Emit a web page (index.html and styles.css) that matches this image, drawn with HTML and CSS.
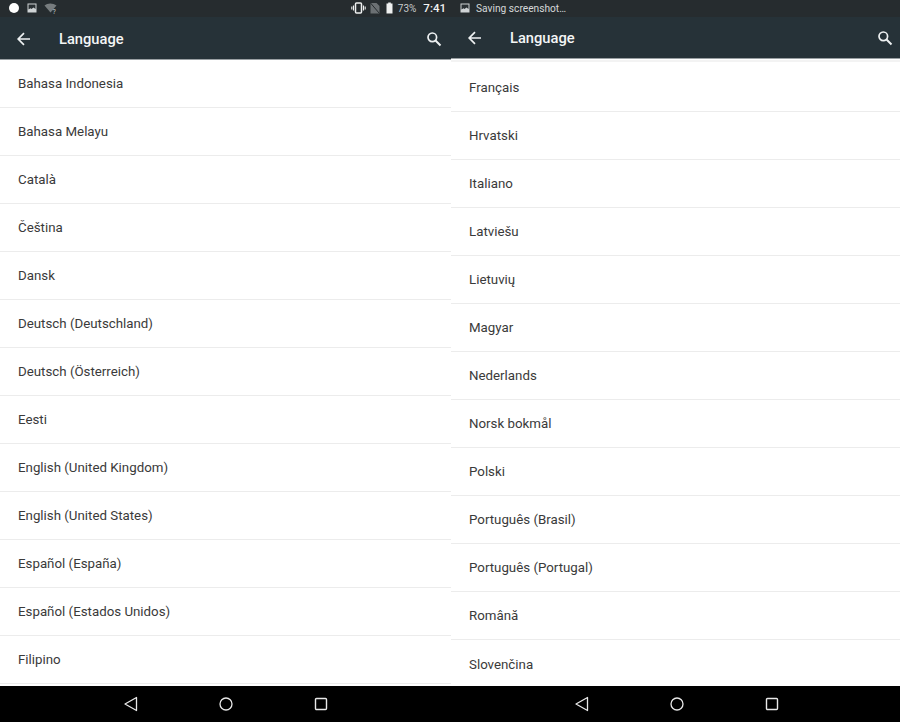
FILE: index.html
```html
<!DOCTYPE html>
<html lang="en">
<head>
    <meta charset="UTF-8">
    <meta name="viewport" content="width=device-width, initial-scale=1.0">
    <title>Language</title>
    <link rel="stylesheet" href="styles.css">
</head>
<body>
    <div class="screens">
        <!-- left phone -->
        <div class="phone phone-left">
            <div class="status-bar">
                <svg width="12" height="12" viewBox="0 0 12 12"><circle cx="6" cy="6" r="5" fill="#fff"/></svg>
                <svg class="st-gap" width="12" height="12" viewBox="0 0 12 12"><path d="M1.500 1.500h9v9h-9z" fill="#cfd3d5"/><path d="M2.500 2.500h7v4.500L7.500 5.500 5.500 7 4.500 6.300 2.500 7.500z" fill="#2a3033"/></svg>
                <svg class="st-gap" width="14" height="12" viewBox="0 0 14 12"><path d="M0.500 3.500C3.500 0.800 9 0.800 12.500 3.500L6.500 10.500z" fill="#777c7e"/><text x="8.500" y="11.500" class="st-q">?</text></svg>
                <div class="status-right">
                    <svg width="15" height="12" viewBox="0 0 15 12"><rect x="4.500" y="1" width="6" height="10" rx="1" fill="none" stroke="#eef0f0" stroke-width="1.500"/><path d="M2.500 3.500v5M0.800 4.500v3M12.500 3.500v5M14.200 4.500v3" stroke="#eef0f0" stroke-width="1.100"/></svg>
                    <svg class="no-sim" width="10" height="12" viewBox="0 0 10 12"><path d="M0.500 1h6L9.500 4v7.500h-9z" fill="#6b7073"/><path d="M0.500 1 9.500 11.500" stroke="#262b2e" stroke-width="1"/></svg>
                    <svg class="battery" width="7" height="12" viewBox="0 0 7 12"><path d="M2.200 0.500h2.600v1h1.700v10h-6v-10h1.700z" fill="#eef0f0"/></svg>
                    <span class="batt-pct">73%</span>
                    <span class="clock">7:41</span>
                </div>
            </div>
            <div class="app-bar">
                <svg width="16" height="16" viewBox="0 0 16 16"><path d="M14 8H2.500M8 2.200 2.200 8 8 13.800" fill="none" stroke="#eef1f2" stroke-width="1.700"/></svg>
                <span class="app-title">Language</span>
                <svg class="search" width="16" height="16" viewBox="0 0 16 16"><circle cx="6.300" cy="6.300" r="4.300" fill="none" stroke="#eef1f2" stroke-width="1.700"/><path d="M9.500 9.500 14.500 14.500" stroke="#eef1f2" stroke-width="1.900"/></svg>
            </div>
            <ul class="lang-list">
                <li>Bahasa Indonesia</li>
                <li>Bahasa Melayu</li>
                <li>Català</li>
                <li>Čeština</li>
                <li>Dansk</li>
                <li>Deutsch (Deutschland)</li>
                <li>Deutsch (Österreich)</li>
                <li>Eesti</li>
                <li>English (United Kingdom)</li>
                <li>English (United States)</li>
                <li>Español (España)</li>
                <li>Español (Estados Unidos)</li>
                <li>Filipino</li>
            </ul>
            <div class="nav-bar">
                <svg width="16" height="16" viewBox="0 0 16 16"><path d="M13.500 1.500v13L2 8z" fill="none" stroke="#e8e8e8" stroke-width="1.300" stroke-linejoin="round"/></svg>
                <svg width="16" height="16" viewBox="0 0 16 16"><circle cx="8" cy="8" r="6" fill="none" stroke="#e8e8e8" stroke-width="1.300"/></svg>
                <svg width="16" height="16" viewBox="0 0 16 16"><rect x="2.500" y="2.500" width="11" height="11" rx="1" fill="none" stroke="#e8e8e8" stroke-width="1.400"/></svg>
            </div>
        </div>

        <!-- right phone -->
        <div class="phone phone-right">
            <div class="status-bar">
                <svg width="12" height="12" viewBox="0 0 12 12"><path d="M1.500 1.500h9v9h-9z" fill="#cfd3d5"/><path d="M2.500 2.500h7v4.500L7.500 5.500 5.500 7 4.500 6.300 2.500 7.500z" fill="#2a3033"/></svg>
                <span class="ticker">Saving screenshot…</span>
            </div>
            <div class="app-bar">
                <svg width="16" height="16" viewBox="0 0 16 16"><path d="M14 8H2.500M8 2.200 2.200 8 8 13.800" fill="none" stroke="#eef1f2" stroke-width="1.700"/></svg>
                <span class="app-title">Language</span>
                <svg class="search" width="16" height="16" viewBox="0 0 16 16"><circle cx="6.300" cy="6.300" r="4.300" fill="none" stroke="#eef1f2" stroke-width="1.700"/><path d="M9.500 9.500 14.500 14.500" stroke="#eef1f2" stroke-width="1.900"/></svg>
            </div>
            <ul class="lang-list">
                <li>Français</li>
                <li>Hrvatski</li>
                <li>Italiano</li>
                <li>Latviešu</li>
                <li>Lietuvių</li>
                <li>Magyar</li>
                <li>Nederlands</li>
                <li>Norsk bokmål</li>
                <li>Polski</li>
                <li>Português (Brasil)</li>
                <li>Português (Portugal)</li>
                <li>Română</li>
                <li>Slovenčina</li>
            </ul>
            <div class="nav-bar">
                <svg width="16" height="16" viewBox="0 0 16 16"><path d="M13.500 1.500v13L2 8z" fill="none" stroke="#e8e8e8" stroke-width="1.300" stroke-linejoin="round"/></svg>
                <svg width="16" height="16" viewBox="0 0 16 16"><circle cx="8" cy="8" r="6" fill="none" stroke="#e8e8e8" stroke-width="1.300"/></svg>
                <svg width="16" height="16" viewBox="0 0 16 16"><rect x="2.500" y="2.500" width="11" height="11" rx="1" fill="none" stroke="#e8e8e8" stroke-width="1.400"/></svg>
            </div>
        </div>
    </div>
</body>
</html>
```

FILE: styles.css
```css
* {
    box-sizing: border-box;
}

html, body {
    margin: 0;
    height: 100%;
    overflow: hidden;
}

body {
    font-family: Roboto, "Liberation Sans", sans-serif;
    background: #fff;
}

.screens {
    display: grid;
    grid-template-columns: 451px 449px;
    height: 722px;
}

.phone {
    display: flex;
    flex-direction: column;
    height: 722px;
    overflow: hidden;
    background: #fff;
}

.status-bar {
    display: flex;
    align-items: center;
    flex-shrink: 0;
    height: 17px;
    padding: 0 5px 1px 8px;
    background: #262c2f;
    color: #dfe2e3;
}

.st-gap {
    margin-left: 6px;
}

.st-q {
    font-size: 7px;
    fill: #c9cccd;
}

.status-right {
    display: flex;
    align-items: center;
    margin-left: auto;
}

.no-sim {
    margin-left: 4px;
}

.battery {
    margin-left: 6px;
}

.batt-pct {
    margin-left: 5px;
    font-size: 10px;
    color: #c6cacb;
}

.clock {
    margin-left: 7px;
    font-size: 11.500px;
    font-weight: 500;
    color: #f2f3f3;
}

.ticker {
    margin-left: 5px;
    font-size: 10.200px;
    color: #d5d8d9;
}

.app-bar {
    display: flex;
    align-items: center;
    flex-shrink: 0;
    height: 43px;
    padding: 1px 9px 0 16px;
    background: #263238;
    border-bottom: 1px solid #9aa0a3;
}

.app-title {
    margin-left: 27px;
    font-size: 14.700px;
    font-weight: 500;
    color: #f4f6f6;
}

.search {
    margin-left: auto;
}

.lang-list {
    flex: 1;
    margin: 0;
    padding: 0;
    list-style: none;
    overflow: hidden;
}

.lang-list li {
    display: flex;
    align-items: center;
    height: 48px;
    padding-left: 18px;
    border-bottom: 1px solid #ececec;
    font-size: 13.300px;
    color: #3a3a3a;
}

.phone-right .app-bar {
    height: 42px;
    padding: 0 7px 0 16px;
}

.phone-right .lang-list {
    margin-top: 1px;
    padding-top: 2px;
    border-top: 2px solid #f3f3f3;
}

.phone-right .lang-list li:last-child {
    border-bottom: none;
}

.nav-bar {
    display: grid;
    grid-template-columns: repeat(3, 95px);
    justify-content: center;
    justify-items: center;
    align-items: center;
    flex-shrink: 0;
    height: 36px;
    background: #000;
}

.phone-right .nav-bar {
    padding-left: 2px;
}
```
